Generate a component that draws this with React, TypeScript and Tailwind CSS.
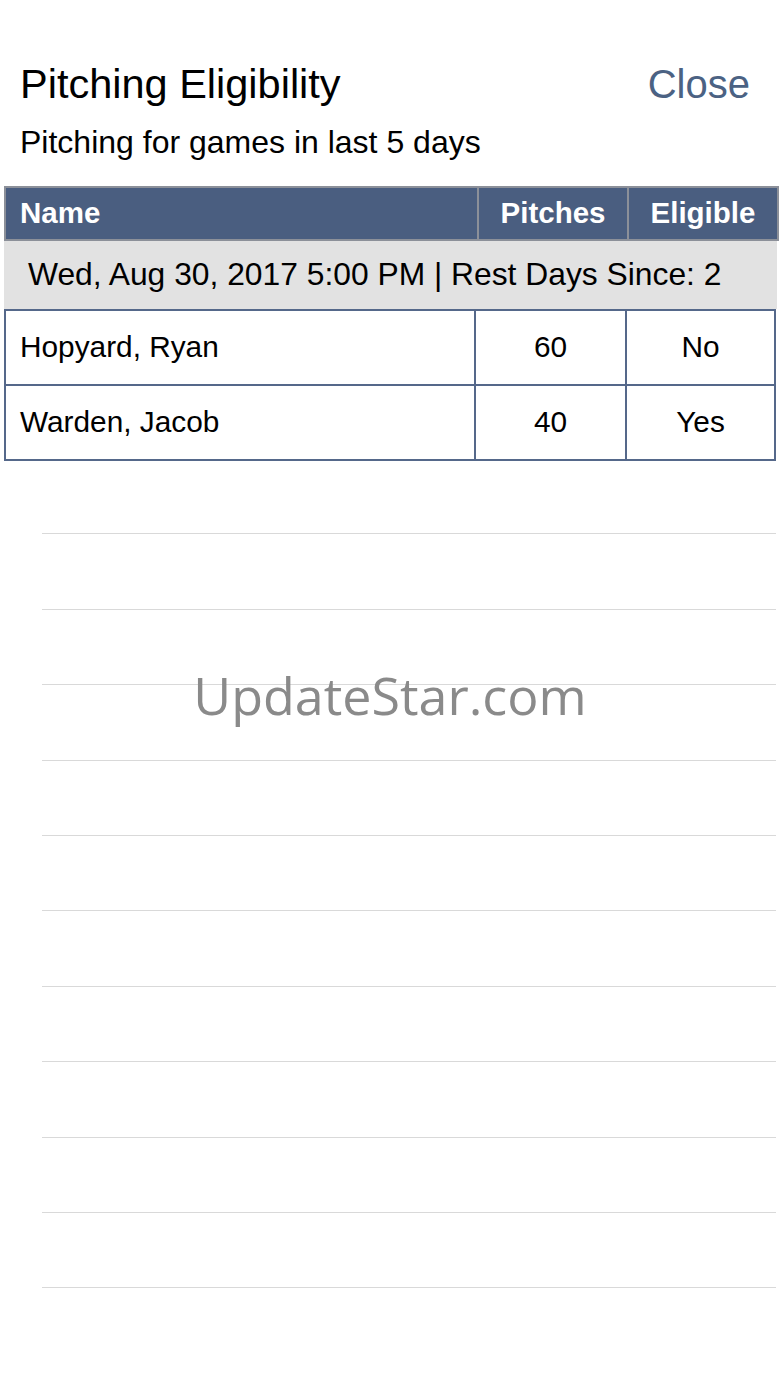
const rows = [
  { name: "Hopyard, Ryan", pitches: 60, eligible: "No" },
  { name: "Warden, Jacob", pitches: 40, eligible: "Yes" },
];

const font = { fontFamily: '"Liberation Sans", Arial, sans-serif' };

export default function App() {
  return (
    <div className="relative w-[780px] h-[1387px] overflow-hidden bg-white text-black" style={font}>
      {/* Title */}
      <div className="flex items-start justify-between pt-[60px] pl-5 pr-[30px]">
        <h1 className="text-[41.5px] leading-[48px]">Pitching Eligibility</h1>
        <button className="text-[40px] leading-[48px] text-[#4b6283]">Close</button>
      </div>
      <p className="mt-[16px] pl-5 text-[32px] leading-[36px]">Pitching for games in last 5 days</p>

      {/* Table */}
      <div className="mt-[26px] ml-[4px] w-[775px]">
        <div className="flex h-[55px] border-2 border-[#8c9099] bg-[#4a5e80] text-[29.5px] font-bold text-white">
          <div className="flex w-[471px] items-center pl-[14px]">Name</div>
          <div className="flex w-[150px] items-center justify-center border-l-2 border-[#8c9099]">Pitches</div>
          <div className="flex flex-1 items-center justify-center border-l-2 border-[#8c9099]">Eligible</div>
        </div>
        <div className="flex h-[68px] w-[773px] items-center bg-[#e2e2e2] pl-[24px] text-[31.8px]">
          Wed, Aug 30, 2017 5:00 PM | Rest Days Since: 2
        </div>
        <div className="w-[772px] border-2 border-[#55688a] text-[29.8px]">
          {rows.map((r, i) => (
            <div
              key={r.name}
              className={`flex ${i > 0 ? "h-[75px] border-t-2 border-[#55688a]" : "h-[73px]"}`}
            >
              <div className="flex w-[468px] items-center pl-[14px]">{r.name}</div>
              <div className="flex w-[151px] items-center justify-center border-l-2 border-[#55688a]">{r.pitches}</div>
              <div className="flex flex-1 items-center justify-center border-l-2 border-[#55688a]">{r.eligible}</div>
            </div>
          ))}
        </div>
      </div>

      {/* Empty rows */}
      <div className="ml-[42px] mr-[4px] mt-[-2px]">
        {Array.from({ length: 11 }).map((_, i) => (
          <div key={i} className="h-[75.4px] border-b-[1.5px] border-[#d9d9d9]" />
        ))}
      </div>

      {/* Watermark */}
      <div
        className="pointer-events-none absolute left-0 right-0 top-[662px] text-center text-[52px] leading-[66px] text-[#8a8a8a]"
        style={{ fontFamily: '"Open Sans", sans-serif' }}
      >
        UpdateStar.com
      </div>
    </div>
  );
}
